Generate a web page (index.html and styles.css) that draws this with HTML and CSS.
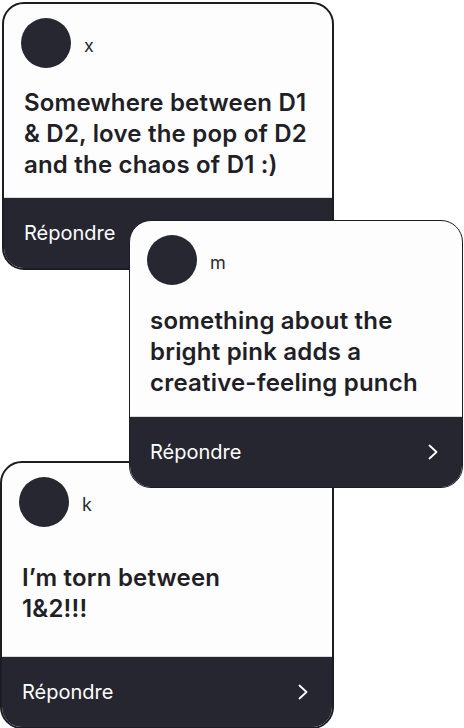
FILE: index.html
```html
<!DOCTYPE html>
<html lang="fr">
<head>
<meta charset="utf-8">
<title>Commentaires</title>
<link rel="stylesheet" href="styles.css">
</head>
<body>
<div class="stack">
  <div class="card card-1">
    <div class="head"><div class="avatar"></div><span class="name">x</span></div>
    <div class="body"><p>Somewhere between D1 &amp; D2, love the pop of D2 and the chaos of D1 :)</p></div>
    <div class="foot"><span>Répondre</span>
      <svg class="chev" viewBox="0 0 10 16" width="10" height="16"><polyline points="1.5,1.5 8.5,8 1.5,14.5" fill="none" stroke="#fff" stroke-width="1.8" stroke-linecap="round" stroke-linejoin="round"/></svg>
    </div>
  </div>
  <div class="card card-2">
    <div class="head"><div class="avatar"></div><span class="name">m</span></div>
    <div class="body"><p>something about the bright pink adds a creative-feeling punch</p></div>
    <div class="foot"><span>Répondre</span>
      <svg class="chev" viewBox="0 0 10 16" width="10" height="16"><polyline points="1.5,1.5 8.5,8 1.5,14.5" fill="none" stroke="#fff" stroke-width="1.8" stroke-linecap="round" stroke-linejoin="round"/></svg>
    </div>
  </div>
  <div class="card card-3">
    <div class="head"><div class="avatar"></div><span class="name">k</span></div>
    <div class="body"><p>I’m torn between<br>1&amp;2!!!</p></div>
    <div class="foot"><span>Répondre</span>
      <svg class="chev" viewBox="0 0 10 16" width="10" height="16"><polyline points="1.5,1.5 8.5,8 1.5,14.5" fill="none" stroke="#fff" stroke-width="1.8" stroke-linecap="round" stroke-linejoin="round"/></svg>
    </div>
  </div>
</div>
</body>
</html>
```

FILE: styles.css
```css
html, body {
  margin: 0;
  padding: 0;
  background: #ffffff;
}
body {
  font-family: Inter, "Noto Sans", "Liberation Sans", sans-serif;
  width: 464px;
  height: 728px;
  overflow: hidden;
}
.stack {
  display: flex;
  flex-direction: column;
  align-items: flex-start;
  padding-top: 2px;
}
.card {
  box-sizing: border-box;
  width: 334px;
  height: 268px;
  border: 2px solid #1c1d24;
  border-radius: 22px;
  overflow: hidden;
  background: #fdfdfd;
  display: flex;
  flex-direction: column;
}
.card-1 {
  width: 332px;
  margin-left: 2px;
}
.card-2 {
  margin-left: 129px;
  margin-top: -50px;
  position: relative;
  z-index: 2;
  border-width: 1.5px;
}
.card-3 {
  margin-top: -27px;
}
.head {
  display: flex;
  align-items: center;
  gap: 13px;
  padding: 14px 0 0 17px;
  flex: none;
}
.avatar {
  width: 50px;
  height: 50px;
  border-radius: 50%;
  background: #262731;
  flex: none;
}
.name {
  font-size: 18px;
  color: #2a2a2e;
  margin-top: 4px;
}
.body {
  flex: 1;
  display: flex;
  align-items: center;
  padding: 2px 0 0 20px;
}
.body p {
  margin: 0;
  max-width: 298px;
  font-size: 24px;
  line-height: 31px;
  font-weight: 600;
  letter-spacing: 0.2px;
  color: #1f2026;
}
.foot {
  flex: none;
  height: 70px;
  background: #252630;
  border-top: 1px solid #d9d9de;
  display: flex;
  align-items: center;
  justify-content: space-between;
  padding: 0 24px 0 20px;
  color: #ffffff;
  font-size: 20px;
}
.chev {
  display: block;
}
```
